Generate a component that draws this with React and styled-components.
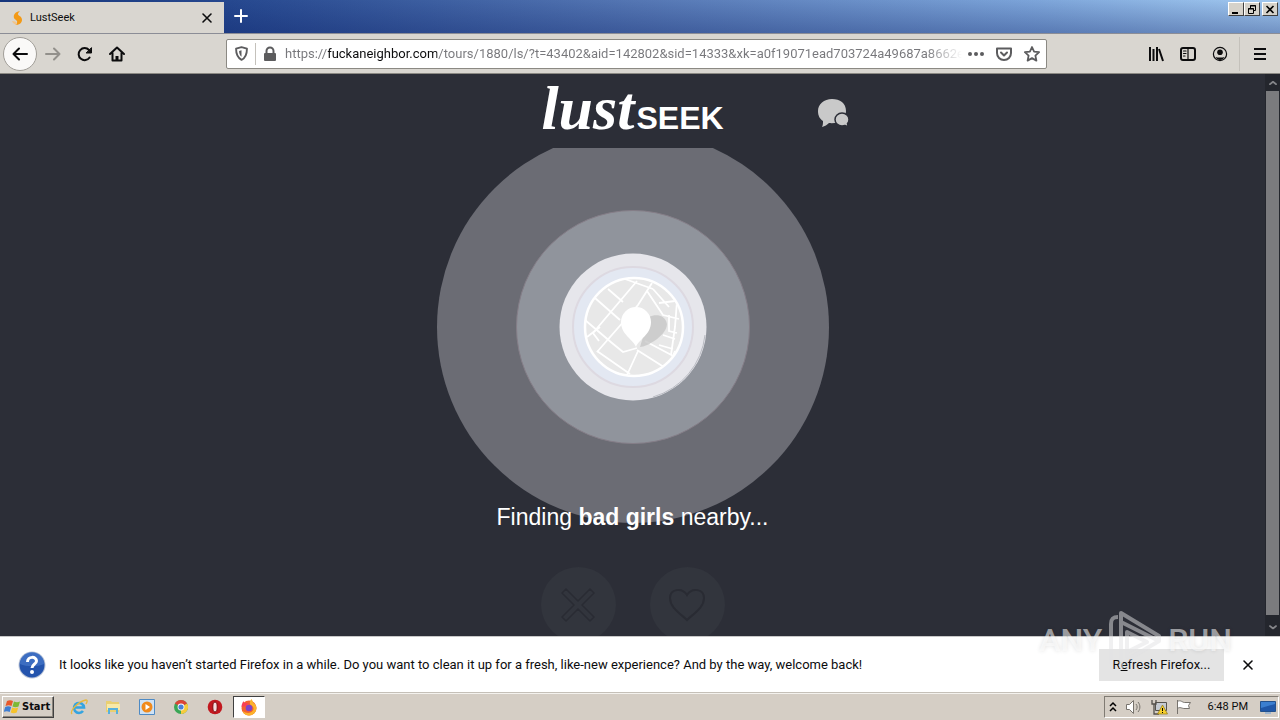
import React from "react";
import styled, { createGlobalStyle } from "styled-components";

const Global = createGlobalStyle`
  * { box-sizing: border-box; }
  body { margin: 0; background: #2c2e37; }
  button, input { font: inherit; color: inherit; margin: 0; padding: 0; border: 0; background: none; }
  svg { display: block; flex: none; }
`;

const Desktop = styled.div`
  position: relative;
  display: flex;
  flex-direction: column;
  height: 100vh;
  overflow: hidden;
  font: 12px/16px Roboto, "Liberation Sans", sans-serif;
  color: #0c0c0d;
`;

/* Title bar */
const TitleBar = styled.header`
  display: flex;
  height: 33px;
  padding-top: 2px;
  background:
    linear-gradient(to bottom, rgba(10,30,100,0), rgba(10,30,100,0.32)),
    linear-gradient(to right, #16367c 0%, #26488f 18%, #5577b4 50%, #7ba3d8 80%, #a2c9f0 100%);
`;
const Tab = styled.div`
  display: flex;
  align-items: center;
  gap: 4px;
  width: 224px;
  padding: 0 11px 0 10px;
  background: #d9d6d0;
  font-size: 11px;
`;
const TabTitle = styled.span`flex: 1;`;
const IconButton = styled.button`
  display: grid;
  place-items: center;
  flex: none;
  width: ${(p) => p.$w || 32}px;
  height: ${(p) => p.$h || 32}px;
  color: ${(p) => p.$color || "#0c0c0d"};
`;
const BackButton = styled(IconButton)`
  border: 1px solid #a19e98;
  border-radius: 50%;
  background: #faf9f8;
`;
const WindowButtons = styled.div`
  display: flex;
  margin-left: auto;
  padding-right: 2px;
`;
const WindowButton = styled.button`
  display: grid;
  place-items: center;
  width: 16px;
  height: 14px;
  margin-left: ${(p) => (p.$apart ? 2 : 0)}px;
  background: #d6d2ca;
  border: 1px solid;
  border-color: #fff #404040 #404040 #fff;
`;

/* Navigation bar */
const NavBar = styled.nav`
  display: flex;
  align-items: center;
  height: 41px;
  padding: 0 0 0 3px;
  background: #d9d6d0;
  border-top: 1px solid #8b8d96;
  border-bottom: 1px solid #8b8983;
`;
const UrlBox = styled.div`
  display: flex;
  align-items: center;
  flex: 0 1 821px;
  min-width: 0;
  height: 30px;
  margin-left: 93px;
  background: #fff;
  border: 1px solid #8b8983;
  border-radius: 2px;
`;
const Divider = styled.span`
  width: 1px;
  height: ${(p) => p.$h}px;
  margin-left: ${(p) => p.$gap || 0}px;
  background: #c4c1bb;
`;
const UrlInput = styled.input`
  flex: 1;
  min-width: 0;
  height: 28px;
  margin-left: 1px;
  font-size: 13px;
  outline: 0;
  color: transparent;
  background-image: linear-gradient(to right, #77777b 0 43px, #0c0c0d 43px 152px, #77777b 152px calc(100% - 36px), transparent);
  background-clip: text;
  -webkit-background-clip: text;
`;
const NavTools = styled.div`
  display: flex;
  align-items: center;
  margin-left: auto;
`;

/* Web page */
const Viewport = styled.div`
  display: flex;
  flex: 1;
  min-height: 0;
  background: #2c2e37;
`;
const Page = styled.main`
  flex: 1;
  min-width: 0;
  overflow: hidden;
`;
const PageHeader = styled.div`
  display: grid;
  grid-template-columns: 1fr auto 1fr;
  align-items: center;
  max-width: 432px;
  height: 74px;
  margin: 0 auto;
  padding-top: 4px;
`;
const Logo = styled.a`
  grid-column: 2;
  display: flex;
  align-items: baseline;
  gap: 2px;
  color: #fff;
  text-decoration: none;
  line-height: 60px;
`;
const LogoScript = styled.span`
  font: italic bold 62px/60px "Liberation Serif", serif;
`;
const LogoSans = styled.span`
  font: bold 32px/60px "Liberation Sans", sans-serif;
`;
const ChatLink = styled.a`justify-self: end;`;
const Radar = styled.div`
  display: flex;
  justify-content: center;
  height: 375px;
  overflow: hidden;
`;
const RadarArt = styled.svg`margin-top: -17px;`;
const Finding = styled.p`
  position: relative;
  margin: -20px 0 0;
  text-align: center;
  color: #fff;
  font: 23px/28px "Liberation Sans", Arial, sans-serif;
`;
const Choices = styled.div`
  display: flex;
  justify-content: center;
  gap: 34px;
  margin-top: 36px;
`;
const Choice = styled.button`
  display: grid;
  place-items: center;
  width: 75px;
  height: 75px;
  border-radius: 50%;
  background: #32353d;
  color: #292b33;
`;
const ScrollBar = styled.div`
  display: flex;
  flex-direction: column;
  align-items: center;
  width: 15px;
  background: #24262d;
  color: #85868a;
`;
const ScrollThumb = styled.div`
  flex: 1;
  width: 13px;
  background: #7b7b7e;
`;
const ScrollArrow = styled(IconButton)`color: #85868a;`;

/* Notification */
const Notice = styled.section`
  display: flex;
  align-items: center;
  height: 56px;
  padding: 0 16px 0 18px;
  background: #fff;
  border-top: 1px solid #c8c8c8;
  font-size: 13px;
`;
const NoticeText = styled.p`
  flex: 1;
  margin: 0 0 0 13px;
  white-space: nowrap;
`;
const RefreshButton = styled.button`
  height: 32px;
  padding: 0;
  width: 125px;
  margin-right: 8px;
  background: #e4e4e4;
`;

/* Taskbar */
const TaskBar = styled.footer`
  display: flex;
  align-items: center;
  height: 28px;
  padding: 0 1px 0 2px;
  background: #d5cec5;
  border-top: 1px solid #c5c0b8;
  box-shadow: inset 0 1px #f4f2ee;
`;
const StartButton = styled.button`
  display: flex;
  align-items: center;
  gap: 1px;
  width: 52px;
  height: 22px;
  padding-left: 1px;
  margin-right: 9px;
  border: 1px solid;
  border-color: #fff #404040 #404040 #fff;
  box-shadow: inset -1px -1px #8a857d;
  font: bold 11px/16px "DejaVu Sans Condensed", sans-serif;
`;
const TaskButton = styled.button`
  display: grid;
  place-items: center;
  width: 32px;
  height: 22px;
  margin-right: 2px;
  border: ${(p) => (p.$active ? "1px solid" : "0")};
  border-color: #404040 #fff #fff #404040;
  background: ${(p) => (p.$active ? "#fff" : "none")};
`;
const Tray = styled.div`
  display: flex;
  align-items: center;
  gap: 8px;
  height: 22px;
  margin-left: auto;
  padding: 0 2px 0 4px;
  border: 1px solid;
  border-color: #807b73 #fff #fff #807b73;
  font-size: 11px;
`;
const Clock = styled.time`margin: 0 4px 0 8px;`;

const Watermark = styled.div`
  position: absolute;
  right: 48px;
  bottom: 50px;
  display: flex;
  align-items: center;
  gap: 5px;
  pointer-events: none;
  color: rgba(255,255,255,0.55);
  font: 500 32px/60px Roboto, sans-serif;
  text-shadow: 0 0 4px rgba(0,0,0,0.12);
`;

const Glyph = ({ size = 16, w = 2, children, ...rest }) => (
  <svg width={size} height={size} viewBox="0 0 16 16" fill="none" stroke="currentColor" strokeWidth={w} strokeLinecap="round" strokeLinejoin="round" aria-hidden="true" {...rest}>
    {children}
  </svg>
);
const CloseGlyph = ({ size = 16 }) => <Glyph size={size} w={1.6}><path d="M4 4l8 8M12 4l-8 8" /></Glyph>;

const url = "https://fuckaneighbor.com/tours/1880/ls/?t=43402&aid=142802&sid=14333&xk=a0f19071ead703724a49687a8662e0";

const streets = [
  "M4-46L-40 6-34 14M19-44L5-22-36 25M-38-29L-13-7M-25-38L-10-25",
  "M-48-7L-21 16-10 25 4 21M-36 24L-3 47M5 24L-6 48M4 23L34 42M12 14L44 31",
  "M-46 10L-33 0M-8-48L20-38M36 38L42 24",
  "M14-36L30-12 46-8M20-38L36-20M26-24L42-26M44-26L42 0 38 28M36-12L36 4 44 6M30 8L42 12M26 18L40 22",
];

function RadarPicture() {
  return (
    <RadarArt width="392" height="392" viewBox="-196 -196 392 392" role="img" aria-label="Searching the area around you">
      <defs>
        <clipPath id="map"><circle r="49" /></clipPath>
      </defs>
      <circle r="196" fill="#6b6c74" />
      <circle r="116.500" fill="#90949c" stroke="#857e88" strokeWidth="1" />
      <circle r="73.500" fill="#e6e6eb" />
      <path d="M72 8A72.500 72.500 0 0 1 20 70" fill="none" stroke="#b9bbc2" strokeWidth="1" />
      <circle r="60" fill="#e3e8f2" stroke="#ddd9e1" strokeWidth="2" />
      <circle r="49" fill="#e8e8e8" />
      <g clipPath="url(#map)" fill="none" stroke="#fff" strokeWidth="1.800">
        {streets.map((d) => <path key={d} d={d} />)}
      </g>
      <circle cx="1" r="49" fill="none" stroke="#fff" strokeWidth="2.500" />
      <path d="M7 20C14 20 34 8 34-3 32-13 22-13 16-10z" fill="#c4c4c4" opacity=".75" />
      <path d="M3 20C1 13-12 8-12-5a15 15 0 0 1 30 0C18 8 5 13 3 20z" fill="#fff" />
    </RadarArt>
  );
}

export default function App() {
  return (
    <Desktop>
      <Global />
      <TitleBar>
        <Tab>
          <svg width="16" height="16" viewBox="0 0 16 16" aria-hidden="true">
            <path d="M10 1C5 2 3 5 4 8c1 2 4 2 3 5 0 1-1 2-2 2 4 0 7-2 7-5 0-4-4-4-4-6 0-1 1-2 2-3z" fill="#f39a16" />
            <path d="M2 11c1 3 4 4 5 3 0-2-2-3-5-3z" fill="#f3c58a" />
          </svg>
          <TabTitle>LustSeek</TabTitle>
          <IconButton $w={14} $h={20} aria-label="Close tab"><CloseGlyph /></IconButton>
        </Tab>
        <IconButton $w={33} $h={28} $color="#fff" aria-label="New tab">
          <Glyph><path d="M8 2v12M2 8h12" /></Glyph>
        </IconButton>
        <WindowButtons>
          <WindowButton aria-label="Minimize"><svg width="10" height="9" viewBox="0 0 10 9"><path d="M1 7h6v2H1z" /></svg></WindowButton>
          <WindowButton aria-label="Restore">
            <svg width="10" height="9" viewBox="0 0 10 9" fill="none" stroke="#000"><path d="M3.500 3V.500h5v5H7M3 1h6M1.500 3.500h5v5h-5zM1 4h6" /></svg>
          </WindowButton>
          <WindowButton $apart aria-label="Close"><svg width="10" height="9" viewBox="0 0 10 9" stroke="#000" strokeWidth="1.600"><path d="M1.500 1l7 7M8.500 1l-7 7" /></svg></WindowButton>
        </WindowButtons>
      </TitleBar>

      <NavBar>
        <BackButton $w={34} $h={34} aria-label="Back"><Glyph><path d="M15 8H1.500M7 2.500L1.500 8 7 13.500" /></Glyph></BackButton>
        <IconButton $color="#92908b" aria-label="Forward"><Glyph><path d="M1 8h13.500M9 2.500L14.500 8 9 13.500" /></Glyph></IconButton>
        <IconButton aria-label="Reload">
          <Glyph><path d="M12.600 11.500A6 6 0 1 1 12 4" /><path d="M14.500 2v5h-5z" fill="currentColor" strokeWidth="1" /></Glyph>
        </IconButton>
        <IconButton aria-label="Home">
          <Glyph><path d="M1 8l7-6.500L15 8M3.500 7v7.500h9V7" /><path d="M8 14v-4" strokeWidth="3" strokeLinecap="butt" /></Glyph>
        </IconButton>
        <UrlBox>
          <IconButton $w={28} $h={28} $color="#5c5c5e" aria-label="Tracking protection">
            <Glyph size={15}><path d="M8 1.200l5.800 1.600c0 6-1.300 9.700-5.800 12-4.500-2.300-5.800-6-5.800-12z" /><path d="M8 4.500v7c-1.800-1.500-2.500-3.500-2.600-6.200z" fill="currentColor" stroke="none" /></Glyph>
          </IconButton>
          <Divider $h={22} />
          <IconButton $w={28} $h={28} $color="#5c5c5e" aria-label="Site information">
            <Glyph><rect x="3" y="8" width="10" height="6" fill="currentColor" /><path d="M4.500 8V5a3.500 3.500 0 0 1 7 0v3" /></Glyph>
          </IconButton>
          <UrlInput type="text" aria-label="Address" defaultValue={url} />
          <IconButton $w={28} $h={28} $color="#5c5c5e" aria-label="Page actions">
            <svg width="16" height="4" viewBox="0 0 16 4" fill="currentColor"><circle cx="2" cy="2" r="2" /><circle cx="8" cy="2" r="2" /><circle cx="14" cy="2" r="2" /></svg>
          </IconButton>
          <IconButton $w={28} $h={28} $color="#5c5c5e" aria-label="Save to Pocket">
            <Glyph><path d="M1 2.500h14V7c0 4-3 7-7 7S1 11 1 7zM5 6.500l3 3 3-3" /></Glyph>
          </IconButton>
          <IconButton $w={28} $h={28} $color="#5c5c5e" aria-label="Bookmark">
            <Glyph w={1.8}><path d="M8 1l2.100 4.600 5 .6-3.700 3.400 1 5L8 12.100l-4.400 2.500 1-5L.9 6.200l5-.6z" /></Glyph>
          </IconButton>
        </UrlBox>
        <NavTools>
          <IconButton aria-label="Library"><Glyph><path d="M2 1v14M5.500 3v12M9 1v14M11 3l4 12" strokeLinecap="butt" /></Glyph></IconButton>
          <IconButton aria-label="Sidebars"><Glyph><rect x="1" y="2" width="14" height="12" rx="2" /><path d="M8 2v12M3.500 5H6M3.500 7.500H6M3.500 10H5" strokeWidth="1.200" /></Glyph></IconButton>
          <IconButton aria-label="Account"><Glyph w={1.2}><circle cx="8" cy="8" r="6.600" /><circle cx="8" cy="6.200" r="2.800" fill="currentColor" stroke="none" /><path d="M3.500 11c2 .8 7 .8 9 0-1 2-2.500 3-4.500 3s-3.500-1-4.500-3z" fill="currentColor" stroke="none" /></Glyph></IconButton>
          <Divider $h={34} $gap={3} />
          <IconButton $w={40} aria-label="Menu"><Glyph><path d="M2 3h12M2 8h12M2 13h12" strokeLinecap="butt" /></Glyph></IconButton>
        </NavTools>
      </NavBar>

      <Viewport>
        <Page>
          <PageHeader>
            <Logo href="#"><LogoScript>lust</LogoScript><LogoSans>SEEK</LogoSans></Logo>
            <ChatLink href="#" aria-label="Messages">
              <svg width="31" height="28" viewBox="0 0 31 28" fill="#c9c9c9">
                <path d="M14 0C6 0 0 5 0 12c0 5 2 8 5 10 0 2 0 4-1 6 3-1 5-2 7-4 10 1 17-4 17-12S22 0 14 0z" />
                <path d="M24 14c-4 0-7 3-7 6.500S20 27 24 27c1 0 2 0 3-.5 1 .5 2 1 3 .5l-.5-2.500c1-1 1.500-2.500 1.500-4C31 17 28 14 24 14z" stroke="#2c2e37" strokeWidth="1.500" />
              </svg>
            </ChatLink>
          </PageHeader>
          <Radar><RadarPicture /></Radar>
          <Finding>Finding <b>bad girls</b> nearby...</Finding>
          <Choices>
            <Choice aria-label="Pass">
              <svg width="36" height="36" viewBox="0 0 36 36" fill="none" stroke="currentColor" strokeWidth="1.500"><path d="M6 2l12 12L30 2l4 4-12 12 12 12-4 4-12-12L6 34l-4-4 12-12L2 6z" strokeLinejoin="round" /></svg>
            </Choice>
            <Choice aria-label="Like">
              <svg width="36" height="36" viewBox="0 0 36 36" fill="none" stroke="currentColor" strokeWidth="2"><path d="M18 33C12 27 1 21 1 11 1 2 13 0 18 8c5-8 17-6 17 3 0 10-11 16-17 22z" /></svg>
            </Choice>
          </Choices>
        </Page>
        <ScrollBar>
          <ScrollArrow $w={15} $h={17} aria-label="Scroll up"><Glyph size={10} w={2.6}><path d="M3 10l5-4 5 4" /></Glyph></ScrollArrow>
          <ScrollThumb />
          <ScrollArrow $w={15} $h={21} aria-label="Scroll down"><Glyph size={10} w={2.6}><path d="M3 8l5 4 5-4" /></Glyph></ScrollArrow>
        </ScrollBar>
      </Viewport>

      <Notice>
        <svg width="28" height="28" viewBox="0 0 28 28" aria-hidden="true">
          <circle cx="14" cy="14" r="13.500" fill="#b9c3d6" />
          <circle cx="14" cy="14" r="12.500" fill="#2454ad" />
          <path d="M2 13a12 12 0 0 1 24 0c-7 3-17 3-24 0z" fill="#4d7fce" opacity=".6" />
          <path d="M9.500 11c0-6 9-6 9-1 0 3-4.500 3.500-4.500 7" fill="none" stroke="#fff" strokeWidth="3" />
          <circle cx="14" cy="21" r="2" fill="#fff" />
        </svg>
        <NoticeText>It looks like you haven’t started Firefox in a while. Do you want to clean it up for a fresh, like-new experience? And by the way, welcome back!</NoticeText>
        <RefreshButton>R<u>e</u>fresh Firefox...</RefreshButton>
        <IconButton aria-label="Dismiss"><CloseGlyph /></IconButton>
      </Notice>

      <TaskBar>
        <StartButton>
          <svg width="17" height="16" viewBox="0 0 17 16" aria-hidden="true">
            <path d="M3 2c2-1 4-1 6 0L7.500 7c-2-1-3.500-1-6 0z" fill="#e8582a" />
            <path d="M10 2.500c2 1 4 1 6 0L14.500 7.500c-2 1-4 1-6 0z" fill="#7cb935" />
            <path d="M1.200 8c2-1 4-1 6 0l-1.500 5c-2-1-4-1-6 0z" fill="#3f7ed2" />
            <path d="M8.200 8.500c2 1 4 1 6 0l-1.500 5c-2 1-4 1-6 0z" fill="#f6c32c" />
          </svg>
          Start
        </StartButton>
        <TaskButton aria-label="Internet Explorer">
          <svg width="18" height="16" viewBox="0 0 18 16" fill="none"><path d="M4.500 8.500h9.500A5 5 0 1 0 13 12" stroke="#35a4e0" strokeWidth="2.600" /><path d="M2 15C-1 12 9 2 16 1c2 0 1 2 0 4" stroke="#e8b93c" strokeWidth="1.400" /></svg>
        </TaskButton>
        <TaskButton aria-label="Explorer">
          <svg width="16" height="16" viewBox="0 0 16 16"><path d="M1 2h5l1 1h7v10H1z" fill="#e9cf72" /><path d="M2 5h13v6H2z" fill="#f8e9a8" /><path d="M3 15V9h10v6h-2v-4H5v4z" fill="#57b1dd" /></svg>
        </TaskButton>
        <TaskButton aria-label="Media Player">
          <svg width="16" height="16" viewBox="0 0 16 16"><path d="M.5.500h15v15H.500z" fill="#cfe2f5" stroke="#4e8ac4" /><circle cx="8" cy="8" r="5.500" fill="#f08a1c" /><path d="M6.500 5v6l4.500-3z" fill="#fff" /></svg>
        </TaskButton>
        <TaskButton aria-label="Chrome">
          <svg width="16" height="16" viewBox="0 0 16 16"><circle cx="8" cy="8" r="7" fill="#3aa655" /><path d="M8 8L1.900 4.500A7 7 0 0 1 14.100 4.500z" fill="#dc4437" /><path d="M8 8l6.100-3.500A7 7 0 0 1 8 15z" fill="#f7cb3c" /><circle cx="8" cy="8" r="3.400" fill="#fff" /><circle cx="8" cy="8" r="2.600" fill="#4a80d8" /></svg>
        </TaskButton>
        <TaskButton aria-label="Opera">
          <svg width="16" height="16" viewBox="0 0 16 16"><circle cx="8" cy="8" r="7.300" fill="#c2181f" /><ellipse cx="8" cy="8" rx="2.200" ry="5" fill="#f4dede" stroke="#7c0b10" /></svg>
        </TaskButton>
        <TaskButton $active aria-label="Firefox">
          <svg width="18" height="18" viewBox="0 0 18 18"><circle cx="9" cy="10" r="7.500" fill="#f4622d" /><path d="M9 17.500A7.500 7.500 0 0 0 16.500 10c0-3-2-4-3-5-1-1-1-3-2-4-2 2-2 4-1 6 3 1 4 4 2 6-1 2-6 3-10 0 1 3 4 4.500 6.500 4.500z" fill="#fbb32c" /><circle cx="9" cy="10" r="3.300" fill="#8043c8" /><path d="M1.500 9c0-3 1-4 2-6 0 1 1 2 2 2h3L6 8z" fill="#f93f56" /></svg>
        </TaskButton>
        <Tray>
          <svg width="8" height="12" viewBox="0 0 8 12" fill="none" stroke="#000" strokeWidth="1.500"><path d="M1 5l3-3 3 3M1 10l3-3 3 3" /></svg>
          <svg width="18" height="16" viewBox="0 0 18 16" fill="#fff" stroke="#77736d"><path d="M1.500 5.500h3l4-4v13l-4-4h-3z" /><path d="M11 5c1.500 2 1.500 4 0 6M13 3c2.500 3 2.500 7 0 10" fill="none" /></svg>
          <svg width="17" height="16" viewBox="0 0 17 16"><path d="M4.500 3.500h11v8h-11z" fill="#c6cbd2" stroke="#55524d" /><path d="M1 1v4h4V1M3 5v10h5" fill="none" stroke="#55524d" strokeWidth="1.300" /><path d="M11.500 6l5 9h-10z" fill="#f7d02c" stroke="#8d7410" strokeWidth=".7" /><path d="M11 9h1v3h-1zM11 13h1v1h-1z" /></svg>
          <svg width="16" height="16" viewBox="0 0 16 16" fill="#fff" stroke="#77736d"><path d="M1.500 1v14M1.500 2.500c3-2 5 1 7 1h6l-2 3 1 3H8c-2 0-4-2-6.500 0z" /></svg>
          <Clock>6:48 PM</Clock>
          <svg width="16" height="14" viewBox="0 0 16 14"><path d="M.5 1.500h15v10H.500z" fill="#3b7fd0" stroke="#23518c" /><path d="M1 8l14-4v7H1z" fill="#1f57a8" /><path d="M5 12h6v2H5z" fill="#9fb6cf" /></svg>
        </Tray>
      </TaskBar>

      <Watermark>
        <span>ANY</span>
        <svg width="56" height="60" viewBox="0 0 56 60" fill="none" stroke="rgba(225,225,228,.5)" strokeWidth="4" strokeLinejoin="round">
          <path d="M4 54V14c0-5 2-7 7-7" />
          <path d="M14 58V3l38 23v5L20 50M14 12l36 18M20 48V22l20 10-20 10" />
        </svg>
        <span>RUN</span>
      </Watermark>
    </Desktop>
  );
}
